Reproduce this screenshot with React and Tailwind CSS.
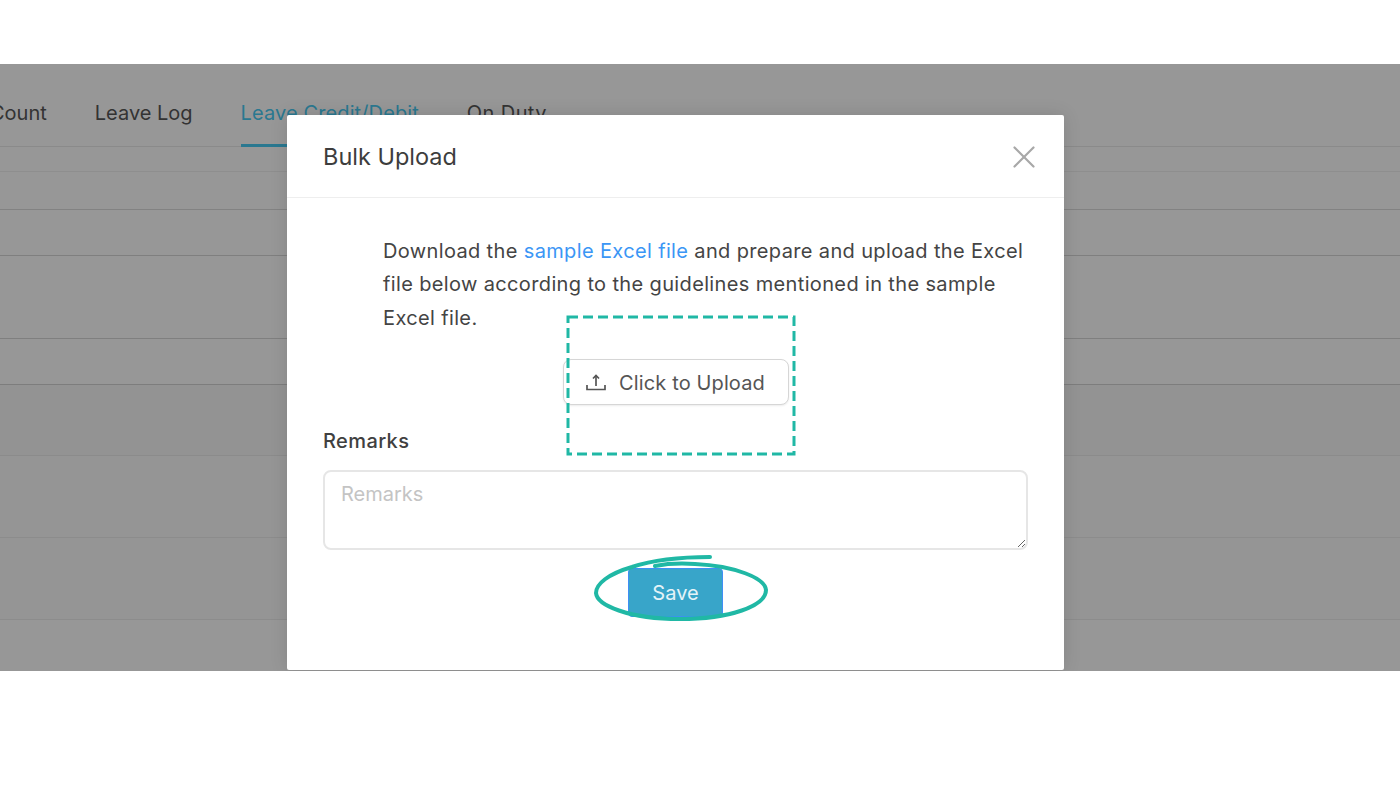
import { X } from "lucide-react"

const rows = [
    { h: "h-[25px]", line: "border-[#8e8e8e]", bg: "bg-[#979797]" },
    { h: "h-[38px]", line: "border-[#828282]", bg: "bg-[#979797]" },
    { h: "h-[46px]", line: "border-[#7f7f7f]", bg: "bg-[#979797]" },
    { h: "h-[83px]", line: "border-[#7f7f7f]", bg: "bg-[#979797]" },
    { h: "h-[46px]", line: "border-[#7d7d7d]", bg: "bg-[#979797]" },
    { h: "h-[71px]", line: "border-[#8b8b8b]", bg: "bg-[#939393]" },
    { h: "h-[82px]", line: "border-[#8c8c8c]", bg: "bg-[#959595]" },
    { h: "h-[82px]", line: "border-[#8c8c8c]", bg: "bg-[#959595]" },
]

function UploadIcon() {
    return (
        <svg width="20" height="17" viewBox="0 0 20 17" fill="none" stroke="#555" strokeWidth="1.7">
            <path d="M10 12V1.500" />
            <path d="M7 4.500 10 1.500l3 3" />
            <path d="M1 11v4.500h18V11" />
        </svg>
    )
}

export default function App() {
    return (
        <div className="relative flex flex-col h-[800px] bg-white overflow-hidden font-['Inter',sans-serif]">
            <div className="h-16 bg-white"></div>

            <div className="relative h-[607px] bg-[#979797] overflow-hidden">
                <div className="flex h-[83px] border-b border-[#8a8a8a] ml-[-10px] gap-[48px] text-[20px] leading-7 text-[#333]">
                    <div className="pt-[35px]">Count</div>
                    <div className="pt-[35px]">Leave Log</div>
                    <div className="pt-[35px] h-[83px] border-b-[3px] border-[#2a7890] text-[#2a7890] tracking-[0.11px]">Leave Credit/Debit</div>
                    <div className="pt-[35px] tracking-[0.4px]">On Duty</div>
                </div>

                {rows.map((row, i) => (
                    <div key={i} className={`${row.h} ${row.bg} ${row.line} border-b`}></div>
                ))}

                {/* modal */}
                <div className="absolute left-[287px] top-[51px] w-[777px] h-[555px] bg-white rounded-[2px] shadow-[0_0_18px_rgba(0,0,0,0.12)] text-[#444]">
                    <div className="flex items-center justify-between h-[83px] pt-[1px] pl-[36px] pr-[36px] border-b border-[#eeeeee]">
                        <h1 className="text-[23.500px] text-[#3d3d3d]">Bulk Upload</h1>
                        <X size={38} strokeWidth={1.4} color="#a8a8a8" className="mr-[-15px]" />
                    </div>

                    <div className="flex flex-col">
                        <p className="ml-[96px] mt-[37px] w-[648px] text-[20px] leading-[33.400px] tracking-[0.36px]">
                            Download the <span className="text-[#3b96f5]">sample Excel file</span> and prepare and upload the Excel file below according to the guidelines mentioned in the sample Excel file.
                        </p>

                        <div className="flex justify-center mt-[24px]">
                            <button className="flex items-center justify-center gap-[13px] w-[226px] h-[46px] pt-[1px] bg-white border border-[#d6d6d6] rounded-[8px] shadow-[0_1px_2px_rgba(0,0,0,0.08)] text-[20px] tracking-[0.13px] text-[#555]">
                                <UploadIcon />
                                Click to Upload
                            </button>
                        </div>

                        <label className="ml-[36px] mt-[22px] text-[20px] leading-7 font-medium tracking-[0.4px] text-[#404040]">Remarks</label>

                        <textarea
                            placeholder="Remarks"
                            className="block mx-[36px] mt-[15px] w-[705px] h-[80px] pl-[16px] pr-[17px] py-[8px] border-2 border-[#e6e6e6] rounded-[8px] text-[20px] leading-7 outline-none placeholder:text-[#c4c4c4]"
                        ></textarea>

                        <div className="flex justify-center mt-[18px]">
                            <button className="w-[95px] h-[49px] bg-[#38a5c9] border border-[#3f8ff5] rounded-[4px] text-[20px] text-[#e4f3f8]">Save</button>
                        </div>
                    </div>
                </div>
            </div>

            <div className="flex-1 bg-white"></div>

            {/* hand drawn annotations on top of the screenshot */}
            <svg className="absolute left-0 top-0 pointer-events-none" width="1400" height="800" fill="none" stroke="#20b8a5">
                <rect x="568" y="317" width="226" height="137" strokeWidth="3" strokeDasharray="10 5" />
                <path
                    d="M710 557C678 557 650 561 632 567C608 574 596 584 596 593C597 605 628 619 680 619C730 619 766 606 766 590C765 578 735 566 695 564C680 563 665 564 655 566"
                    strokeWidth="4"
                    strokeLinecap="round"
                />
            </svg>
        </div>
    )
}
